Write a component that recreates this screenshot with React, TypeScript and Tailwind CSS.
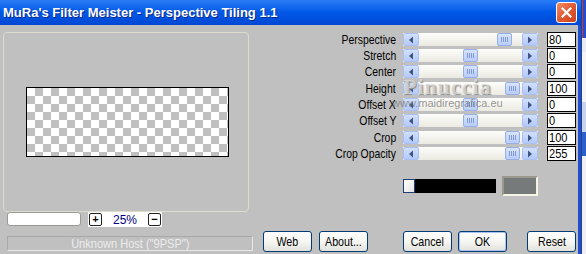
import React from "react";

type Row = { label: string; value: string; pos: number; tall?: boolean };

const rows: Row[] = [
  { label: "Perspective", value: "80", pos: 78 },
  { label: "Stretch", value: "0", pos: 44 },
  { label: "Center", value: "0", pos: 44, tall: true },
  { label: "Height", value: "100", pos: 86 },
  { label: "Offset X", value: "0", pos: 44 },
  { label: "Offset Y", value: "0", pos: 44, tall: true },
  { label: "Crop", value: "100", pos: 86 },
  { label: "Crop Opacity", value: "255", pos: 86 },
];

function Arrow({ dir }: { dir: "l" | "r" }) {
  return (
    <div className="flex h-full w-[16px] items-center justify-center rounded-[2px] border border-[#aac0f2] bg-gradient-to-b from-[#d2e0fd] to-[#b3c9f8]">
      <svg width="6" height="8" viewBox="0 0 6 8">
        {dir === "l" ? (
          <path d="M5 0.5 L1 4 L5 7.5 Z" fill="#3f5583" />
        ) : (
          <path d="M1 0.5 L5 4 L1 7.5 Z" fill="#3f5583" />
        )}
      </svg>
    </div>
  );
}

function Slider({ pos }: { pos: number }) {
  return (
    <div className="flex h-[13px] w-[135px] bg-gradient-to-b from-[#fdfdfa] to-[#ebeae2]">
      <Arrow dir="l" />
      <div className="relative flex-1">
        <div
          className="absolute top-0 flex h-[13px] w-[15px] items-center justify-center gap-[1px] rounded-[2px] border border-[#97afe8] bg-gradient-to-b from-[#d8e4fd] to-[#b8cdf8]"
          style={{ left: pos }}
        >
          <span className="h-[5px] w-[1px] bg-[#8098d6]" />
          <span className="h-[5px] w-[1px] bg-[#8098d6]" />
          <span className="h-[5px] w-[1px] bg-[#8098d6]" />
          <span className="h-[5px] w-[1px] bg-[#8098d6]" />
        </div>
      </div>
      <Arrow dir="r" />
    </div>
  );
}

function Btn({ label, def }: { label: string; def?: boolean }) {
  return (
    <div
      className={
        "flex h-[21px] w-[49px] items-center justify-center rounded-[3px] border border-[#003c74] bg-gradient-to-b from-[#ffffff] via-[#f6f6f3] to-[#e2e1da] " +
        (def ? "shadow-[inset_0_0_0_1px_#a9c2f0]" : "")
      }
    >
      <span className="scale-x-[0.82] whitespace-nowrap text-[13px] leading-none text-black">{label}</span>
    </div>
  );
}

export default function App() {
  return (
    <div className="flex h-[254px] w-[586px] overflow-hidden bg-[#c0c0c0] font-['Liberation_Sans',Arial,sans-serif]">
      <div className="flex w-[581px] flex-col">
        {/* title bar */}
        <div className="flex h-[25px] items-center justify-between bg-gradient-to-b from-[#2a7cf6] via-[#0057e7] to-[#0048d4] pl-[3px] pr-[4px]">
          <span className="text-[13px] font-bold text-white [text-shadow:1px_1px_0_#0a2a8a]">
            MuRa's Filter Meister - Perspective Tiling 1.1
          </span>
          <div className="flex h-[21px] w-[21px] items-center justify-center rounded-[3px] border border-white bg-gradient-to-br from-[#f08a66] via-[#e25a32] to-[#c8421c]">
            <svg width="11" height="11" viewBox="0 0 11 11">
              <path d="M1.5 1.5 L9.5 9.5 M9.5 1.5 L1.5 9.5" stroke="#fff" strokeWidth="2.2" strokeLinecap="square" />
            </svg>
          </div>
        </div>

        {/* body */}
        <div className="relative flex flex-1 border-r-[3px] border-[#1d4fd6] text-black">
          {/* left column */}
          <div className="flex w-[258px] flex-col pl-[3px] pt-[7px]">
            <div className="h-[180px] w-[246px] rounded-[4px] border border-[#dedccc] pl-[22px] pt-[54px]">
              <div className="h-[70px] w-[203px] border border-black bg-[conic-gradient(#c0c0c0_25%,#ffffff_0_50%,#c0c0c0_0_75%,#ffffff_0)] bg-[length:16px_16px]" />
            </div>
            <div className="flex items-start pl-[4px]">
              <div className="h-[14px] w-[74px] rounded-[3px] border border-[#9a9a94] bg-white" />
              <div className="ml-[7px] flex h-[15px] w-[74px] items-center bg-white pl-[1px]">
                <div className="flex h-[13px] w-[13px] items-center justify-center rounded-[2px] border border-[#222] text-[11px] font-bold leading-none">
                  +
                </div>
                <span className="flex-1 text-center text-[12px] leading-none text-[#000080]">25%</span>
                <div className="mr-[1px] flex h-[13px] w-[13px] items-center justify-center rounded-[2px] border border-[#222] text-[11px] font-bold leading-none">
                  −
                </div>
              </div>
            </div>
            <div className="ml-[4px] mt-[9px] flex h-[15px] w-[246px] items-center justify-center border border-t-[#a8a8a8] border-l-[#a8a8a8] border-b-[#e8e8e8] border-r-[#e8e8e8]">
              <span className="scale-x-[0.92] text-[12px] leading-none text-[#ececec]">Unknown Host ("9PSP")</span>
            </div>
          </div>

          {/* right column */}
          <div className="flex flex-1 flex-col pt-[7px]">
            {rows.map((r) => (
              <div key={r.label} className={"flex items-start " + (r.tall ? "h-[17px]" : "h-[16px]")}>
                <div className="flex h-[15px] w-[138px] items-center justify-end">
                  <span className="origin-right scale-x-[0.8] whitespace-nowrap text-[13px] leading-none">
                    {r.label}
                  </span>
                </div>
                <div className="ml-[7px] mt-[1px]">
                  <Slider pos={r.pos} />
                </div>
                <div className="ml-[9px] flex h-[15px] w-[29px] items-center border border-black bg-white pl-[1px]">
                  <span className="origin-left scale-x-[0.85] text-[13px] leading-none">{r.value}</span>
                </div>
              </div>
            ))}

            <div className="mt-[14px] flex h-[20px] items-center pl-[145px]">
              <div className="flex h-[14px] w-[93px] bg-black">
                <div className="h-[14px] w-[12px] border border-[#1e3f74] bg-gradient-to-br from-white to-[#e4e4e4]" />
              </div>
              <div className="ml-[6px] h-[20px] w-[36px] border-2 border-t-[#9a988a] border-l-[#9a988a] border-b-[#f6f4e6] border-r-[#f6f4e6] bg-[#767a7a]" />
            </div>

            <div className="mt-[35px] flex pl-[5px]">
              <Btn label="Web" />
              <div className="ml-[7px]">
                <Btn label="About..." />
              </div>
              <div className="ml-[35px]">
                <Btn label="Cancel" />
              </div>
              <div className="ml-[6px]">
                <Btn label="OK" def />
              </div>
              <div className="ml-[20px]">
                <Btn label="Reset" />
              </div>
            </div>
          </div>

          {/* watermark over the sliders */}
          <div className="pointer-events-none absolute left-[392px] top-[51px] flex flex-col items-center">
            <span className="font-['Liberation_Serif',serif] text-[22px] font-bold leading-none tracking-[1px] text-[#dcdcdc]/80 [text-shadow:1px_1px_1px_#8a8a8a]">
              Pinuccia
            </span>
            <span className="text-[11px] leading-none text-[#7c7c7c]/80">www.maidiregrafica.eu</span>
          </div>
        </div>
      </div>

      {/* window behind, at the right edge */}
      <div className="flex w-[5px] flex-col border-l border-[#2a3d7c]">
        <div className="h-[38px] border-l border-[#d43a2a] bg-[#1d4fd6]" />
        <div className="h-[14px] bg-[#e8ecf4]" />
        <div className="h-[50px] bg-[#f4f4f4]" />
        <div className="h-[30px] bg-[#c8d4ec]" />
        <div className="h-[24px] bg-[#2d5fc8]" />
        <div className="flex-1 bg-[#eef0f4]" />
      </div>
    </div>
  );
}
